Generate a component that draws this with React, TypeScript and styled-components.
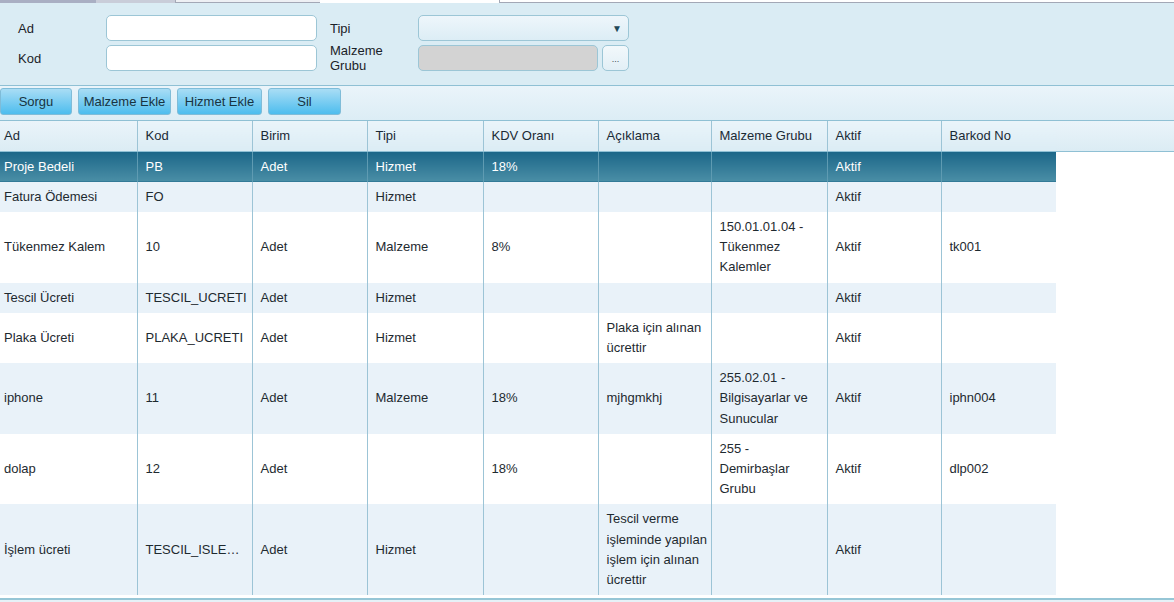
import React from "react";
import styled, { createGlobalStyle, css } from "styled-components";

const GlobalStyle = createGlobalStyle`
  html, body {
    margin: 0;
    padding: 0;
    background: #e6f1f7;
  }
  body {
    font-family: "Liberation Sans", Arial, sans-serif;
    font-size: 13px;
    color: #1e2a30;
  }
  * { box-sizing: border-box; }
`;

const Page = styled.div`
  width: 1174px;
  height: 602px;
  overflow: hidden;
  display: flex;
  flex-direction: column;
`;

const TabStrip = styled.div`
  display: flex;
  height: 3px;
  background: #daecf4;
`;

const TabPiece = styled.div<{ $w?: number; $bg: string; $line?: boolean }>`
  width: ${({ $w }) => ($w ? `${$w}px` : "auto")};
  flex: ${({ $w }) => ($w ? "none" : "1")};
  background: ${({ $bg }) => $bg};
  ${({ $line }) =>
    $line &&
    css`
      border-bottom: 1px solid #a3a8b6;
      border-left: 1px solid #a3a8b6;
    `}
`;

const FilterPanel = styled.div`
  background: #daecf4;
  border-bottom: 1px solid #8fc0d4;
  padding: 12px 0 14px 18px;
  display: grid;
  grid-template-columns: 88px 211px 101px 211px;
  grid-auto-rows: 26px;
  row-gap: 4px;
  align-items: center;
`;

const Label = styled.div<{ $indent?: boolean }>`
  padding-left: ${({ $indent }) => ($indent ? "13px" : "0")};
  line-height: 15px;
  color: #1a2228;
`;

const fieldBase = css`
  height: 26px;
  border: 1px solid #9cc6d6;
  border-radius: 5px;
`;

const TextInput = styled.input`
  ${fieldBase};
  width: 100%;
  background: #fff;
  font: inherit;
  padding: 0 6px;
  outline: none;
`;

const SelectBox = styled.div`
  ${fieldBase};
  background: linear-gradient(#eef6fb, #dcedf5);
  display: flex;
  align-items: center;
  justify-content: flex-end;
  padding-right: 6px;
  color: #1f4858;
  font-size: 10px;
`;

const PickerRow = styled.div`
  display: flex;
  gap: 4px;
`;

const GreyField = styled.div`
  ${fieldBase};
  flex: 1;
  background: #d3d3d3;
`;

const DotsButton = styled.div`
  ${fieldBase};
  width: 27px;
  background: linear-gradient(#f2f8fb, #e2eff6);
  display: flex;
  align-items: flex-end;
  justify-content: center;
  padding-bottom: 6px;
  font-size: 9px;
  color: #3a4a52;
  line-height: 1;
`;

const Toolbar = styled.div`
  display: flex;
  gap: 6px;
  padding: 2px 0 3px;
  height: 35px;
  background: linear-gradient(#eaf4fa, #dcedf5);
  border-bottom: 1px solid #8fc0d4;
`;

const Button = styled.button<{ $w: number }>`
  height: 27px;
  width: ${({ $w }) => $w}px;
  padding: 0;
  border: 1px solid #7fbcd8;
  border-radius: 3px;
  background: linear-gradient(#a9ddf5, #4dbdee);
  font: inherit;
  color: #183442;
  cursor: pointer;
`;

const Grid = styled.div`
  flex: 1;
  background: #e6f1f7;
`;

const GridBody = styled.div`
  background: #fff;
  padding-bottom: 3px;
  border-bottom: 2px solid #96c6d6;
`;

const Table = styled.table`
  width: 1174px;
  table-layout: fixed;
  border-collapse: collapse;
`;

const HeadCell = styled.th<{ $first?: boolean; $last?: boolean }>`
  height: 30px;
  padding: 0 4px 0 ${({ $first }) => ($first ? "4px" : "8px")};
  text-align: left;
  font-weight: normal;
  color: #1a2a35;
  background: linear-gradient(#eaf4fa, #dbecf4);
  border-bottom: 1px solid #8fc0d4;
  border-right: ${({ $last }) => ($last ? "none" : "1px solid #9cc4d6")};
`;

const Row = styled.tr<{ $alt?: boolean; $selected?: boolean }>`
  td {
    background: ${({ $alt }) => ($alt ? "#e9f2f9" : "#fff")};
  }
  ${({ $selected }) =>
    $selected &&
    css`
      td {
        background: linear-gradient(#1b6688, #4a8ea6);
        color: #fff;
        border-right-color: #5f9bb2;
      }
    `}
`;

const Cell = styled.td<{ $first?: boolean; $last?: boolean; $ellipsis?: boolean; $tight?: boolean }>`
  padding: 5px ${({ $tight }) => ($tight ? "0" : "4px")} 5px ${({ $first }) => ($first ? "4px" : "8px")};
  line-height: 20.2px;
  vertical-align: middle;
  border-right: ${({ $last }) => ($last ? "none" : "1px solid #9cc4d6")};
  ${({ $ellipsis }) =>
    $ellipsis &&
    css`
      white-space: nowrap;
      overflow: hidden;
      text-overflow: ellipsis;
    `}
`;

const Filler = styled.td`
  background: #fff !important;
`;

const columns = [
  { title: "Ad", width: 137 },
  { title: "Kod", width: 115 },
  { title: "Birim", width: 115 },
  { title: "Tipi", width: 116 },
  { title: "KDV Oranı", width: 115 },
  { title: "Açıklama", width: 113 },
  { title: "Malzeme Grubu", width: 116 },
  { title: "Aktif", width: 114 },
  { title: "Barkod No", width: 115 },
];

const rows: string[][] = [
  ["Proje Bedeli", "PB", "Adet", "Hizmet", "18%", "", "", "Aktif", ""],
  ["Fatura Ödemesi", "FO", "", "Hizmet", "", "", "", "Aktif", ""],
  ["Tükenmez Kalem", "10", "Adet", "Malzeme", "8%", "", "150.01.01.04 - Tükenmez Kalemler", "Aktif", "tk001"],
  ["Tescil Ücreti", "TESCIL_UCRETI", "Adet", "Hizmet", "", "", "", "Aktif", ""],
  ["Plaka Ücreti", "PLAKA_UCRETI", "Adet", "Hizmet", "", "Plaka için alınan ücrettir", "", "Aktif", ""],
  ["iphone", "11", "Adet", "Malzeme", "18%", "mjhgmkhj", "255.02.01 - Bilgisayarlar ve Sunucular", "Aktif", "iphn004"],
  ["dolap", "12", "Adet", "", "18%", "", "255 - Demirbaşlar Grubu", "Aktif", "dlp002"],
  ["İşlem ücreti", "TESCIL_ISLEM_UCRETI", "Adet", "Hizmet", "", "Tescil verme işleminde yapılan işlem için alınan ücrettir", "", "Aktif", ""],
];

export default function App() {
  return (
    <Page>
      <GlobalStyle />
      <TabStrip>
        <TabPiece $w={96} $bg="#a9afc3" />
        <TabPiece $w={79} $bg="#c9cdd9" />
        <TabPiece $w={145} $bg="#eef0f4" $line />
        <TabPiece $w={179} $bg="#ffffff" />
        <TabPiece $bg="#ffffff" $line />
      </TabStrip>

      <FilterPanel>
        <Label>Ad</Label>
        <TextInput />
        <Label $indent>Tipi</Label>
        <SelectBox>▼</SelectBox>
        <Label>Kod</Label>
        <TextInput />
        <Label $indent>Malzeme Grubu</Label>
        <PickerRow>
          <GreyField />
          <DotsButton>...</DotsButton>
        </PickerRow>
      </FilterPanel>

      <Toolbar>
        <Button $w={72}>Sorgu</Button>
        <Button $w={93}>Malzeme Ekle</Button>
        <Button $w={85}>Hizmet Ekle</Button>
        <Button $w={73}>Sil</Button>
      </Toolbar>

      <Grid>
        <GridBody>
          <Table>
            <colgroup>
              {columns.map((c) => (
                <col key={c.title} style={{ width: c.width }} />
              ))}
              <col style={{ width: 118 }} />
            </colgroup>
            <thead>
              <tr>
                {columns.map((c, i) => (
                  <HeadCell key={c.title} $first={i === 0} $last={i === columns.length - 1}>
                    {c.title}
                  </HeadCell>
                ))}
                <HeadCell $last />
              </tr>
            </thead>
            <tbody>
              {rows.map((r, ri) => (
                <Row key={ri} $alt={ri % 2 === 1} $selected={ri === 0}>
                  {r.map((v, ci) => (
                    <Cell
                      key={ci}
                      $first={ci === 0}
                      $last={ci === r.length - 1}
                      $ellipsis={ci === 1}
                      $tight={ci === 5}
                    >
                      {v}
                    </Cell>
                  ))}
                  <Filler />
                </Row>
              ))}
            </tbody>
          </Table>
        </GridBody>
      </Grid>
    </Page>
  );
}
